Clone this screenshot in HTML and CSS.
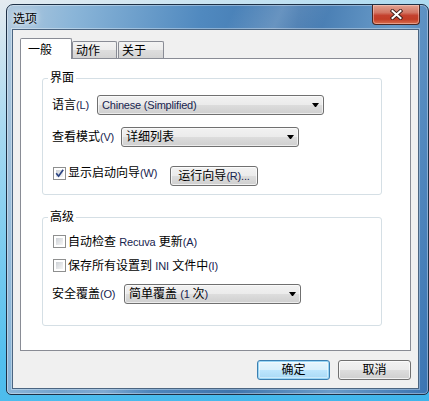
FILE: index.html
```html
<!DOCTYPE html>
<html lang="zh-CN">
<head>
  <meta charset="UTF-8">
  <title>选项</title>
  <link rel="stylesheet" href="styles.css">
</head>
<body>
  <div class="window">
    <div class="titlebar">
      <span class="title">选项</span>
      <button class="close" title="关闭">
        <svg width="13" height="11" viewBox="0 0 13 11">
          <path d="M2.5 2 L10.5 9 M10.5 2 L2.5 9" stroke="#3b1d1a" stroke-width="3.8" stroke-linecap="square" />
          <path d="M2.5 2 L10.5 9 M10.5 2 L2.5 9" stroke="#fff" stroke-width="2" stroke-linecap="square" />
        </svg>
      </button>
    </div>

    <div class="client">
      <div class="tabs">
        <div class="tab active">一般</div>
        <div class="tab tab-action">动作</div>
        <div class="tab tab-about">关于</div>
      </div>

      <div class="panel">
        <fieldset class="group">
          <legend>界面</legend>
          <div class="row">
            <label class="label w-lang">语言<span class="en">(L)</span></label>
            <div class="combo combo-lang"><span class="en">Chinese (Simplified)</span></div>
          </div>
          <div class="row">
            <label class="label w-view">查看模式<span class="en">(V)</span></label>
            <div class="combo combo-view"><span>详细列表</span></div>
          </div>
          <div class="row row-wizard">
            <label class="check-label w-wizard">
              <span class="check"><svg width="11" height="11" viewBox="0 0 11 11"><path d="M2.2 5.2 L4.6 8.2 L9.2 1.8" fill="none" stroke="#2c4483" stroke-width="1.7" /></svg></span>
              <span>显示启动向导<span class="en">(W)</span></span>
            </label>
            <button class="btn btn-wizard">运行向导<span class="en">(R)...</span></button>
          </div>
        </fieldset>

        <fieldset class="group group-adv">
          <legend>高级</legend>
          <label class="check-label">
            <span class="check"></span>
            <span>自动检查 <span class="en">Recuva</span> 更新<span class="en">(A)</span></span>
          </label>
          <label class="check-label row-gap">
            <span class="check"></span>
            <span>保存所有设置到 <span class="en">INI</span> 文件中<span class="en">(I)</span></span>
          </label>
          <div class="row row-wipe">
            <label class="label w-wipe">安全覆盖<span class="en">(O)</span></label>
            <div class="combo combo-wipe"><span>简单覆盖 <span class="en">(1 </span>次<span class="en">)</span></span></div>
          </div>
        </fieldset>
      </div>

      <div class="actions">
        <button class="btn default">确定</button>
        <button class="btn">取消</button>
      </div>
    </div>
  </div>
</body>
</html>
```

FILE: styles.css
```css
* {
  box-sizing: border-box;
}

body {
  margin: 0;
  width: 429px;
  height: 401px;
  overflow: hidden;
  font: 12px/14px "Liberation Sans", "Noto Sans CJK SC", sans-serif;
  color: #000;
  background: linear-gradient(165deg, #e4ebf0 0%, #a8d9f1 25%, #52bfee 70%, #3fb4ea 100%);
}

button {
  font: inherit;
  color: inherit;
  padding: 0;
}

.en {
  font-size: 11px;
  letter-spacing: -0.2px;
  color: #18244f;
}

/* window frame */
.window {
  margin: 4px 0 0 6px;
  width: 423px;
  height: 391px;
  display: flex;
  flex-direction: column;
  padding: 0 9px 5px 5px;
  border: 1px solid #1d3046;
  border-radius: 7px 7px 5px 5px;
  background:
    linear-gradient(115deg, rgba(255,255,255,0) 38%, rgba(255,255,255,.2) 46%, rgba(255,255,255,0) 54%),
    linear-gradient(100deg, #b0c9de 0%, #8ab5d8 14%, #5089bf 40%, #3f75ad 60%, #6a9cc9 80%, #3a74b2 100%);
  box-shadow: inset 0 0 0 1px rgba(255,255,255,.35);
}

.titlebar {
  display: flex;
  align-items: flex-start;
  height: 26px;
}

.title {
  padding: 7px 0 0 1px;
  text-shadow: 0 0 5px rgba(255,255,255,.9), 0 0 10px rgba(255,255,255,.8);
}

.close {
  margin-left: auto;
  margin-right: -1px;
  width: 48px;
  height: 20px;
  display: flex;
  align-items: center;
  justify-content: center;
  border: 1px solid #4a2621;
  border-top: 0;
  border-radius: 0 0 4px 4px;
  background: linear-gradient(#e2a291 0%, #d27563 40%, #c4412e 55%, #c23d26 75%, #d8704f 100%);
  box-shadow: inset 0 0 0 1px rgba(255,220,210,.45);
}

.client {
  flex: 1;
  display: flex;
  flex-direction: column;
  padding: 8px 7px;
  border: 1px solid #4b6581;
  background: #f0f0f0;
  box-shadow: 0 0 0 1px rgba(255,255,255,.35);
}

/* tabs */
.tabs {
  display: flex;
  align-items: flex-end;
  height: 21px;
  margin-bottom: -1px;
}

.tab {
  height: 18px;
  padding: 2px 0 0 3px;
  border: 1px solid #898c95;
  border-bottom: 0;
  border-radius: 2px 2px 0 0;
  background: linear-gradient(#f3f3f3, #ebebeb 50%, #dddddd 50%, #d3d3d3);
}

.tab.active {
  position: relative;
  z-index: 1;
  width: 52px;
  height: 21px;
  padding: 4px 0 0 7px;
  background: #fff;
}

.tab-action {
  width: 45px;
}

.tab-about {
  width: 46px;
  margin-left: 1px;
}

.panel {
  height: 293px;
  padding: 12px 0 0 21px;
  border: 1px solid #898c95;
  background: #fff;
}

/* group boxes */
.group {
  margin: 0;
  width: 340px;
  min-width: 0;
  padding: 10px 8px 8px 9px;
  border: 1px solid #d5dfe5;
  border-radius: 3px;
}

.group legend {
  margin-left: -4px;
  padding: 0 2px;
}

.group-adv {
  margin-top: 15px;
  padding: 11px 8px 21px 9px;
}

.row {
  display: flex;
  align-items: center;
}

.row + .row {
  margin-top: 12px;
}

.row.row-wizard {
  align-items: flex-start;
  margin-top: 19px;
}

.row.row-wipe {
  margin-top: 12px;
}

.w-lang { width: 45px; }
.w-view { width: 69px; }
.w-wipe { width: 72px; }
.w-wizard { width: 117px; }

.combo {
  display: flex;
  align-items: center;
  height: 20px;
  padding-left: 4px;
  border: 1px solid #707070;
  border-radius: 3px;
  background: linear-gradient(#f2f2f2, #ebebeb 50%, #dddddd 50%, #cfcfcf);
  box-shadow: inset 0 0 0 1px rgba(255,255,255,.6);
}

.combo::after {
  content: "";
  margin-left: auto;
  margin-right: 4px;
  width: 1px;
  border-top: 4px solid #000;
  border-left: 3px solid transparent;
  border-right: 3px solid transparent;
}

.combo-lang { width: 227px; }
.combo-view { width: 178px; }
.combo-wipe { width: 177px; }

/* checkboxes */
.check-label {
  display: flex;
  align-items: center;
  height: 13px;
  margin-left: 1px;
}

.w-wizard {
  height: 14px;
}

.check {
  flex: none;
  width: 13px;
  height: 13px;
  margin-right: 2px;
  padding: 2px;
  border: 1px solid #8e8f8f;
  background: linear-gradient(135deg, #cdd1d6, #f6f6f6) content-box, #fff;
}

.check svg {
  display: block;
  margin: -2px;
}

.row-gap {
  margin-top: 11px;
}

/* buttons */
.btn {
  height: 20px;
  border: 1px solid #707070;
  border-radius: 3px;
  background: linear-gradient(#f2f2f2, #ebebeb 50%, #dddddd 50%, #cfcfcf);
  box-shadow: inset 0 0 0 1px rgba(255,255,255,.7);
}

.btn-wizard {
  width: 88px;
}

.actions {
  display: flex;
  justify-content: flex-end;
  gap: 8px;
  margin-top: 9px;
}

.actions .btn {
  width: 73px;
}

.btn.default {
  border-color: #3c7fb1;
  background: linear-gradient(#e8f5fc, #d9f0fc 50%, #bee6fd 50%, #a7d9f5);
  box-shadow: inset 0 0 0 1px #9ad6f5, inset 0 0 0 2px rgba(255,255,255,.4);
}
```
